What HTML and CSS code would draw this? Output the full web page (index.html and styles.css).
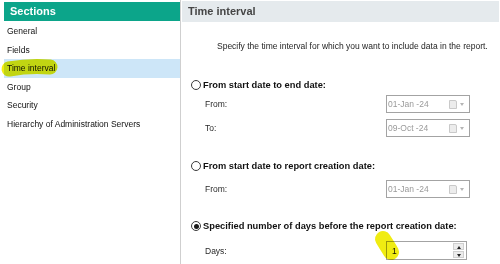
FILE: index.html
```html
<!DOCTYPE html>
<html>
<head>
<meta charset="utf-8">
<link rel="stylesheet" href="styles.css">
</head>
<body>
<div class="app">
  <aside class="sidebar">
    <div class="sidebar-header">Sections</div>
    <ul class="nav">
      <li>General</li>
      <li>Fields</li>
      <li class="active">Time interval</li>
      <li>Group</li>
      <li>Security</li>
      <li>Hierarchy of Administration Servers</li>
    </ul>
  </aside>
  <main class="main">
    <div class="main-header">Time interval</div>
    <p class="intro">Specify the time interval for which you want to include data in the report.</p>

    <div class="option opt1"><span class="radio"></span><span class="opt-label">From start date to end date:</span></div>
    <div class="field f1"><span class="field-label">From:</span>
      <span class="datebox"><span class="dtext">01-Jan -24</span><span class="cal"></span><span class="caret"></span></span></div>
    <div class="field f2"><span class="field-label">To:</span>
      <span class="datebox"><span class="dtext">09-Oct -24</span><span class="cal"></span><span class="caret"></span></span></div>

    <div class="option opt2"><span class="radio"></span><span class="opt-label">From start date to report creation date:</span></div>
    <div class="field f3"><span class="field-label">From:</span>
      <span class="datebox"><span class="dtext">01-Jan -24</span><span class="cal"></span><span class="caret"></span></span></div>

    <div class="option opt3"><span class="radio checked"></span><span class="opt-label">Specified number of days before the report creation date:</span></div>
    <div class="field f4"><span class="field-label">Days:</span>
      <span class="spinbox"><span class="stext">1</span>
        <span class="spin"><span class="spin-btn up"></span><span class="spin-btn down"></span></span></span></div>
  </main>
  <svg class="marker" width="500" height="264" viewBox="0 0 500 264">
    <path d="M9 69 C 20 67, 38 66, 50 67" stroke="#f0ec12" stroke-width="15" stroke-linecap="round" fill="none"/>
    <path d="M383 239 C 386 244, 389 248, 391 252" stroke="#f0ec12" stroke-width="16" stroke-linecap="round" fill="none"/>
  </svg>
</div>
</body>
</html>
```
FILE: styles.css
```css
html, body {
  margin: 0;
  padding: 0;
  background: #fff;
}
body {
  font-family: "Liberation Sans", Arial, sans-serif;
  font-size: 8.5px;
  color: #111;
}
.app {
  position: relative;
  display: flex;
  width: 500px;
  height: 264px;
  overflow: hidden;
}
.sidebar {
  width: 176px;
  margin-left: 4px;
  padding-top: 2px;
  border-right: 1px solid #cfcfcf;
  flex: none;
}
.sidebar-header {
  height: 19px;
  line-height: 19px;
  background: #0ca58a;
  color: #fff;
  font-weight: bold;
  font-size: 11px;
  padding-left: 6px;
}
.nav {
  list-style: none;
  margin: 0;
  padding: 1px 0 0 0;
}
.nav li {
  height: 18.6px;
  line-height: 18.6px;
  padding-left: 3px;
  color: #111;
  white-space: nowrap;
}
.nav li.active {
  background: #cde6f8;
}
.main {
  flex: 1;
  padding-top: 1px;
  padding-left: 1px;
  padding-right: 1px;
}
.main-header {
  height: 21px;
  line-height: 21px;
  background: #e5eaed;
  color: #454545;
  font-weight: bold;
  font-size: 11px;
  padding-left: 6px;
}
.intro {
  margin: 18px 0 0 35px;
  line-height: 12px;
  color: #1e1e1e;
  white-space: nowrap;
}
.option {
  display: flex;
  align-items: center;
  height: 14px;
  padding-left: 9px;
}
.opt1 { margin-top: 26px; }
.opt2 { margin-top: 22px; }
.opt3 { margin-top: 21px; }
.radio {
  position: relative;
  width: 8px;
  height: 8px;
  border: 1px solid #3a3a3a;
  border-radius: 50%;
  background: #fff;
  flex: none;
}
.radio.checked::after {
  content: "";
  position: absolute;
  left: 1.5px;
  top: 1.5px;
  width: 5px;
  height: 5px;
  border-radius: 50%;
  background: #1a1a1a;
}
.opt-label {
  margin-left: 2px;
  font-weight: bold;
  font-size: 9.3px;
  color: #111;
  white-space: nowrap;
}
.field {
  display: flex;
  align-items: center;
  height: 18px;
  padding-left: 23px;
}
.f1 { margin-top: 3px; }
.f2 { margin-top: 6px; }
.f3 { margin-top: 7px; }
.f4 { margin-top: 8px; height: 19px; }
.field-label {
  width: 181px;
  flex: none;
  color: #2a2a2a;
}
.datebox {
  display: flex;
  align-items: center;
  width: 82px;
  height: 16px;
  border: 1px solid #a3a3a3;
  background: #fff;
  flex: none;
}
.dtext {
  flex: 1;
  padding-left: 1px;
  color: #9a9a9a;
}
.cal {
  width: 6px;
  height: 7px;
  border: 1px solid #c9c9c9;
  background: #ececec;
  border-radius: 0 2px 0 0;
}
.caret {
  width: 0;
  height: 0;
  margin: 0 5px 0 3px;
  border-left: 2.5px solid transparent;
  border-right: 2.5px solid transparent;
  border-top: 3px solid #b5b5b5;
}
.spinbox {
  display: flex;
  align-items: center;
  width: 79px;
  height: 17px;
  border: 1px solid #a3a3a3;
  background: #fff;
  flex: none;
}
.stext {
  flex: 1;
  padding-left: 5px;
  color: #111;
}
.spin {
  display: flex;
  flex-direction: column;
  gap: 1px;
  width: 11px;
  margin-right: 2px;
}
.spin-btn {
  position: relative;
  height: 7px;
  background: #ececec;
  border: 1px solid #cfcfcf;
  box-sizing: border-box;
}
.spin-btn::after {
  content: "";
  position: absolute;
  left: 2.5px;
  top: 1.5px;
  border-left: 2.5px solid transparent;
  border-right: 2.5px solid transparent;
}
.spin-btn.up::after { border-bottom: 3px solid #222; }
.spin-btn.down::after { border-top: 3px solid #222; }
.marker {
  position: absolute;
  left: 0;
  top: 0;
  pointer-events: none;
  mix-blend-mode: multiply;
}
```
